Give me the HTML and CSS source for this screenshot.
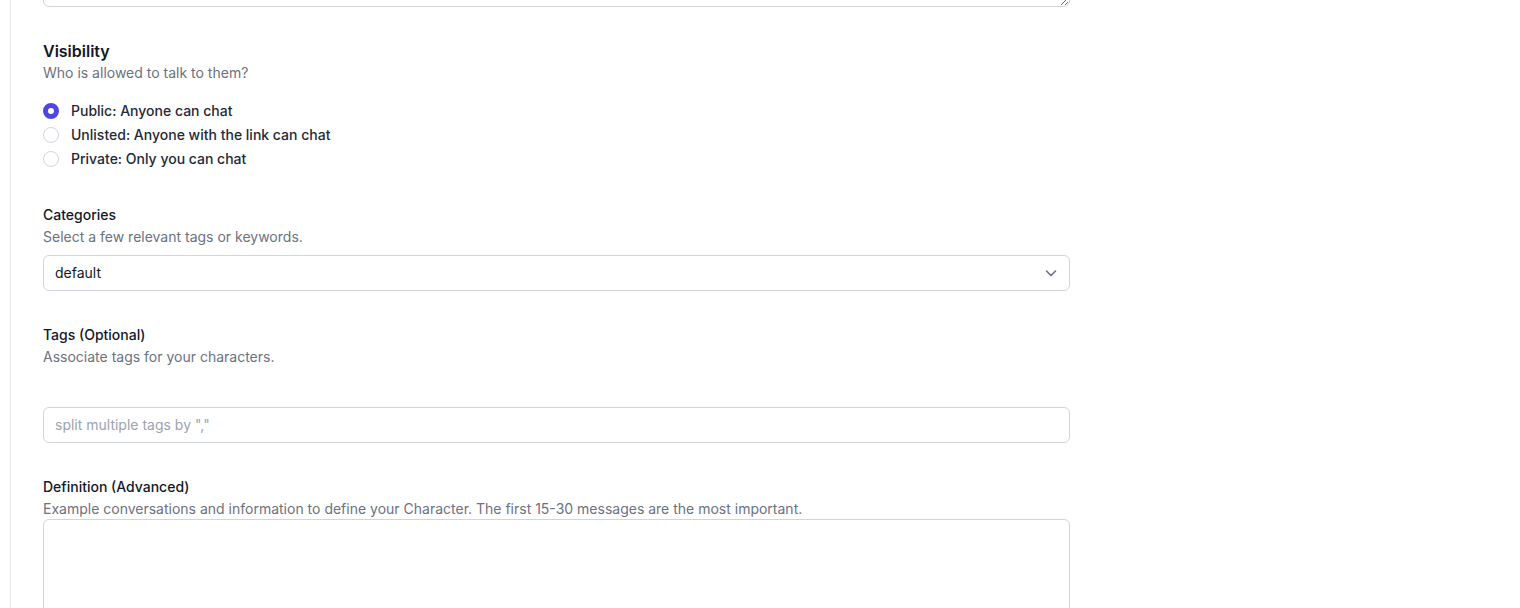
FILE: index.html
```html
<!DOCTYPE html>
<html lang="en">
<head>
<meta charset="utf-8">
<title>Character form</title>
<link rel="stylesheet" href="styles.css">
</head>
<body>
<div class="page">
  <div class="panel">
    <textarea class="top-area" aria-label="Description"></textarea>

    <section class="field">
      <h3 class="heading">Visibility</h3>
      <p class="hint">Who is allowed to talk to them?</p>
      <div class="radios">
        <label class="radio-row"><span class="radio checked"></span><span>Public: Anyone can chat</span></label>
        <label class="radio-row"><span class="radio"></span><span>Unlisted: Anyone with the link can chat</span></label>
        <label class="radio-row"><span class="radio"></span><span>Private: Only you can chat</span></label>
      </div>
    </section>

    <section class="field">
      <div class="label">Categories</div>
      <p class="hint">Select a few relevant tags or keywords.</p>
      <div class="select">
        <span>default</span>
        <svg class="chev" width="20" height="20" viewBox="0 0 20 20" fill="none"><path d="M5.5 8l4.5 4.5 4.5-4.5" stroke="#6b7280" stroke-width="1.6" stroke-linecap="round" stroke-linejoin="round"/></svg>
      </div>
    </section>

    <section class="field">
      <div class="label">Tags (Optional)</div>
      <p class="hint">Associate tags for your characters.</p>
      <div class="input tags-input"><span class="placeholder">split multiple tags by ","</span></div>
    </section>

    <section class="field">
      <div class="label">Definition (Advanced)</div>
      <p class="hint">Example conversations and information to define your Character. The first 15-30 messages are the most important.</p>
      <div class="big-area"></div>
    </section>
  </div>
</div>
</body>
</html>
```

FILE: styles.css
```css
* { box-sizing: border-box; }
html, body {
  margin: 0;
  padding: 0;
  background: #ffffff;
  overflow: hidden;
  height: 608px;
}
body {
  font-family: Inter, "Noto Sans", sans-serif;
  color: #111827;
  font-size: 14px;
  line-height: 20px;
}
.page {
  padding-left: 10px;
}
.panel {
  border-left: 1px solid #e5e7eb;
  padding-left: 32px;
  width: 1060px;
  height: 700px;
}
.top-area {
  display: block;
  width: 1027px;
  height: 80px;
  margin: -73px 0 0 0;
  border: 1px solid #d1d5db;
  border-radius: 6px;
  resize: vertical;
  font-family: inherit;
  background: #fff;
}
.field {
  margin-top: 32px;
}
.heading {
  margin: 0;
  font-size: 16px;
  line-height: 24px;
  font-weight: 600;
  color: #111827;
}
.label {
  font-size: 14px;
  line-height: 24px;
  font-weight: 500;
  color: #111827;
}
.hint {
  margin: 0;
  font-size: 14px;
  line-height: 20px;
  color: #6b7280;
}
.radios {
  margin-top: 16px;
  display: flex;
  flex-direction: column;
}
.radio-row {
  display: flex;
  align-items: center;
  gap: 12px;
  height: 24px;
  font-size: 14px;
  font-weight: 500;
  color: #1f2937;
}
.radio {
  width: 16px;
  height: 16px;
  border-radius: 50%;
  border: 1px solid #d1d5db;
  background: #fff;
  flex: none;
}
.radio.checked {
  border: 5px solid #4f46e5;
  background: #fff;
}
.select, .input {
  width: 1027px;
  height: 36px;
  border: 1px solid #d1d5db;
  border-radius: 6px;
  display: flex;
  align-items: center;
  padding: 0 11px;
  font-size: 14px;
  color: #111827;
}
.select {
  margin-top: 8px;
  justify-content: space-between;
  padding-right: 8px;
}
.chev { flex: none; }
.tags-input {
  margin-top: 40px;
}
.placeholder {
  color: #9ca3af;
}
.big-area {
  width: 1027px;
  height: 160px;
  border: 1px solid #d1d5db;
  border-radius: 6px;
}
```
